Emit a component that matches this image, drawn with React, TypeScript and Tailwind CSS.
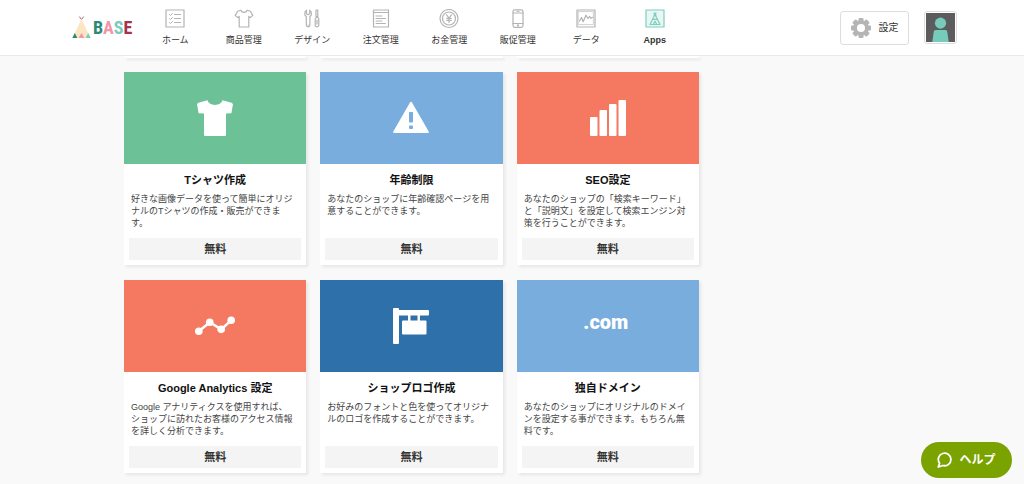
import type { ReactNode } from 'react'

const FONT = "font-['Liberation_Sans','Noto_Sans_CJK_JP',sans-serif]"

const NavIcon = ({ children, className = 'text-[#b3b3b3]' }: { children: ReactNode; className?: string }) => (
  <svg
    viewBox="0 0 20 20"
    className={`size-5 ${className}`}
    fill="none"
    stroke="currentColor"
    strokeWidth="1.2"
    strokeLinecap="round"
    strokeLinejoin="round"
    aria-hidden="true"
  >
    {children}
  </svg>
)

const navItems: { label: string; icon: ReactNode; active?: boolean }[] = [
  {
    label: 'ホーム',
    icon: (
      <NavIcon>
        <rect x="1" y="1" width="18" height="17" />
        <path d="M4.5 5.5l1 1 2-2M4.5 9.5l1 1 2-2M4.5 13.5l1 1 2-2M9.5 5.5h6M9.5 9.5h6M9.5 13.5h6" strokeWidth="1" />
      </NavIcon>
    ),
  },
  {
    label: '商品管理',
    icon: (
      <NavIcon>
        <path d="M6.8 1.2C7.8 4 12.2 4 13.2 1.2L16.3 2.2 18.8 6.4 16.3 8.6 14.8 7.4V18H5.2V7.4L3.7 8.6 1.2 6.4 3.7 2.2z" />
      </NavIcon>
    ),
  },
  {
    label: 'デザイン',
    icon: (
      <NavIcon>
        <path d="M4.5 1.2v3.5l1.6 1 1.6-1V1.2C10 2.6 10 6.4 7.9 7.6V16a1.8 1.8 0 0 1-3.6 0V7.6C2.2 6.4 2.2 2.6 4.5 1.2zM6.1 16v.2" />
        <path d="M14 1h1.8v6.5H14zM13.2 10.5c0-3 3.6-3 3.6 0V16a1.8 1.8 0 0 1-3.6 0zM15 11v4" />
      </NavIcon>
    ),
  },
  {
    label: '注文管理',
    icon: (
      <NavIcon>
        <path d="M2.5 1h15v17h-15zM2.5 3.5h15" />
        <path d="M5 7h6M5 9.5h9.5M5 12h6M5 14.5h9.5" strokeWidth="1" />
      </NavIcon>
    ),
  },
  {
    label: 'お金管理',
    icon: (
      <NavIcon>
        <circle cx="10" cy="9.5" r="9" />
        <circle cx="10" cy="9.5" r="6.5" />
        <path d="M7.5 5.8L10 9l2.5-3.2M10 9v4.5M7.8 9.4h4.4M7.8 11.4h4.4" />
      </NavIcon>
    ),
  },
  {
    label: '販促管理',
    icon: (
      <NavIcon>
        <rect x="5" y="0.8" width="10" height="17.6" rx="1.8" />
        <path d="M5 4h10M5 14.5h10M9 2.4h2" strokeWidth="1" />
        <circle cx="10" cy="16.4" r="0.5" />
      </NavIcon>
    ),
  },
  {
    label: 'データ',
    icon: (
      <NavIcon>
        <rect x="1" y="1" width="18" height="17" />
        <rect x="2.6" y="2.6" width="14.8" height="13" strokeWidth="0.6" />
        <path d="M3.5 12l2-3.5 1.6 4.2L10 6.2l2 3.3 1.5-2 1.5 1.8 1.6-1" />
      </NavIcon>
    ),
  },
  {
    label: 'Apps',
    active: true,
    icon: (
      <NavIcon className="text-[#7fcdbf]">
        <rect x="1" y="1" width="18" height="17" fill="#e9f7f4" />
        <path d="M9 4l2 2.2M11 4L9 6.2M10 5.5L5 15.5h10zM8.2 15.5l1.8-3.3 1.8 3.3M7.6 10.4h4.8" />
      </NavIcon>
    ),
  },
]

const ShirtIcon = () => (
  <svg viewBox="0 0 36 36" className="size-9" fill="#fff" aria-hidden="true">
    <path d="M10.5.3C12 6.5 24 6.5 25.5.3L34.6 2.8 36 4 34.4 13.2 29 13.4V35q0 1-1 1H8q-1 0-1-1V13.4L1.6 13.2 0 4 1.4 2.8z" />
  </svg>
)

const WarningIcon = () => (
  <svg viewBox="0 0 36 36" className="size-9" aria-hidden="true">
    <path d="M17 2.6q1-1.6 2 0L35.7 31.5q.6 1.5-1 1.5H1.3q-1.6 0-1-1.5z" fill="#fff" />
    <rect x="16" y="12" width="4" height="10.5" rx="0.8" fill="#79addd" />
    <rect x="16" y="25.5" width="4" height="3.5" rx="1" fill="#79addd" />
  </svg>
)

const BarsIcon = () => (
  <svg viewBox="0 0 36 36" className="size-9" fill="#fff" aria-hidden="true">
    <rect x="0" y="17" width="7.5" height="19" rx="1" />
    <rect x="9.5" y="10" width="7.5" height="26" rx="1" />
    <rect x="19" y="4" width="7.5" height="32" rx="1" />
    <rect x="28.5" y="0" width="7.5" height="36" rx="1" />
  </svg>
)

const LineIcon = () => (
  <svg viewBox="0 0 42 20" className="h-5 w-10" fill="#fff" aria-hidden="true">
    <path d="M4 15.5L15.5 6 27.5 13.5 38 4" fill="none" stroke="#fff" strokeWidth="2.6" />
    <circle cx="4" cy="15.5" r="4" />
    <circle cx="15.5" cy="6" r="4" />
    <circle cx="27.5" cy="13.5" r="4" />
    <circle cx="38" cy="4" r="4" />
  </svg>
)

const SignIcon = () => (
  <svg viewBox="0 0 36 36" className="size-9" fill="#fff" aria-hidden="true">
    <rect x="0" y="0" width="6" height="36" rx="1" />
    <rect x="4" y="2" width="32" height="5.5" rx="1" />
    <rect x="15" y="7" width="2.5" height="6" />
    <rect x="24.5" y="7" width="2.5" height="6" />
    <rect x="9" y="12.5" width="24.5" height="14" rx="1" />
  </svg>
)

const apps: { title: string; text: string; color: string; icon: ReactNode }[] = [
  {
    title: 'Tシャツ作成',
    text: '好きな画像データを使って簡単にオリジナルのTシャツの作成・販売ができます。',
    color: 'bg-[#6cc196]',
    icon: <ShirtIcon />,
  },
  {
    title: '年齢制限',
    text: 'あなたのショップに年齢確認ページを用意することができます。',
    color: 'bg-[#79addd]',
    icon: <WarningIcon />,
  },
  {
    title: 'SEO設定',
    text: 'あなたのショップの「検索キーワード」と「説明文」を設定して検索エンジン対策を行うことができます。',
    color: 'bg-[#f57860]',
    icon: <BarsIcon />,
  },
  {
    title: 'Google Analytics 設定',
    text: 'Google アナリティクスを使用すれば、ショップに訪れたお客様のアクセス情報を詳しく分析できます。',
    color: 'bg-[#f57860]',
    icon: <LineIcon />,
  },
  {
    title: 'ショップロゴ作成',
    text: 'お好みのフォントと色を使ってオリジナルのロゴを作成することができます。',
    color: 'bg-[#2e70a9]',
    icon: <SignIcon />,
  },
  {
    title: '独自ドメイン',
    text: 'あなたのショップにオリジナルのドメインを設定する事ができます。もちろん無料です。',
    color: 'bg-[#79addd]',
    icon: <span className="pr-1 pb-2 font-['Roboto',sans-serif] text-xl leading-5 font-black text-white">.com</span>,
  },
]

const Logo = () => (
  <a href="#" aria-label="BASE" className="flex w-[69px] shrink-0 items-center gap-0.5">
    <svg viewBox="0 0 19 23" className="h-[23px] w-[19px] shrink-0" aria-hidden="true">
      <path d="M7.3.6L9.5 3.5 11.7.6" fill="none" stroke="#b5606a" strokeWidth="1" />
      <path d="M9.5 3L18.5 22H.5z" fill="#fbe5c3" />
      <path d="M2.8 17L5.3 22H.3z" fill="#2a8a78" />
      <path d="M9.5 17L12.3 22H6.7z" fill="#f295a5" />
      <path d="M16.2 17L18.7 22h-5z" fill="#78ccbc" />
    </svg>
    <span className="font-['Liberation_Sans_Narrow','Roboto_Condensed','Roboto',sans-serif] text-lg leading-6 font-bold">
      <span className="text-[#2a8a78]">B</span>
      <span className="text-[#f295a5]">A</span>
      <span className="text-[#78ccbc]">S</span>
      <span className="text-[#a8324c]">E</span>
    </span>
  </a>
)

const Header = () => (
  <header className="flex h-14 items-center border-b border-[#e9e9e9] bg-white pr-[67px] pl-18">
    <Logo />
    <nav className="grid max-w-[548px] flex-1 grid-cols-8 pt-0.5">
      {navItems.map(({ label, icon, active }) => (
        <a
          key={label}
          href="#"
          className={`flex flex-col items-center gap-[3px] text-[9px] leading-4 text-[#333] ${active ? 'font-bold' : ''}`}
        >
          {icon}
          {label}
        </a>
      ))}
    </nav>
    <div className="ml-auto flex items-center gap-[15px]">
      <button
        type="button"
        className="flex h-[34px] w-[69px] items-center justify-center gap-2 rounded-[3px] border border-[#ddd] bg-white text-[10px] text-[#333]"
      >
        <svg viewBox="0 0 20 20" className="size-5" aria-hidden="true">
          <g fill="#b5b5b5">
            <rect x="7.5" y="0" width="5" height="20" rx="1" />
            <rect x="7.5" y="0" width="5" height="20" rx="1" transform="rotate(45 10 10)" />
            <rect x="7.5" y="0" width="5" height="20" rx="1" transform="rotate(90 10 10)" />
            <rect x="7.5" y="0" width="5" height="20" rx="1" transform="rotate(135 10 10)" />
            <circle cx="10" cy="10" r="7.8" />
          </g>
          <circle cx="10" cy="10" r="4" fill="#fff" />
        </svg>
        設定
      </button>
      <button type="button" aria-label="アカウント" className="rounded-[3px] border border-[#ddd] bg-white p-px">
        <svg viewBox="0 0 30 30" className="size-[29px]" aria-hidden="true">
          <rect width="30" height="30" fill="#5c5c5e" />
          <circle cx="15" cy="10.5" r="5.8" fill="#76cbbb" />
          <path d="M6.5 30L8 19.5Q8.2 17.5 10 17.5H20Q21.8 17.5 22 19.5L23.5 30z" fill="#76cbbb" />
        </svg>
      </button>
    </div>
  </header>
)

export default function App() {
  return (
    <div className={`min-h-screen bg-[#f9f9f9] ${FONT}`}>
      <Header />
      <main className="ml-31 max-w-[575px]">
        {/* bottom edge of the row scrolled under the header */}
        <div className="mb-3.5 grid grid-cols-3 gap-x-3.5">
          <div className="h-0.5 bg-white shadow-[2px_2px_3px_rgba(0,0,0,0.08)]" />
          <div className="h-0.5 bg-white shadow-[2px_2px_3px_rgba(0,0,0,0.08)]" />
          <div className="h-0.5 bg-white shadow-[2px_2px_3px_rgba(0,0,0,0.08)]" />
        </div>
        <div className="grid grid-cols-3 gap-x-3.5 gap-y-[15px]">
          {apps.map(({ title, text, color, icon }) => (
            <a
              key={title}
              href="#"
              className="flex flex-col bg-white pb-[5px] shadow-[2px_2px_3px_rgba(0,0,0,0.08)]"
            >
              <div className={`flex h-[92px] items-center justify-center ${color}`}>{icon}</div>
              <h2 className="pt-2 text-center text-[11px] leading-4 font-bold text-[#111]">{title}</h2>
              <p className="mt-[5px] min-h-9 pr-[13px] pl-[7px] text-[9px] leading-3 text-[#444]">{text}</p>
              <p className="mx-[5px] mt-[9px] bg-[#f4f4f4] text-center text-[11px] leading-[22px] font-bold text-[#333]">
                無料
              </p>
            </a>
          ))}
        </div>
      </main>
      <button
        type="button"
        className="fixed right-3 bottom-1.5 flex h-9 w-[91px] items-center justify-center gap-1.5 rounded-full bg-[#7aa300] text-xs font-bold text-white"
      >
        <svg
          viewBox="0 0 16 16"
          className="size-4"
          fill="none"
          stroke="#fff"
          strokeWidth="1.8"
          strokeLinejoin="round"
          aria-hidden="true"
        >
          <path d="M2.6 11.2A6.3 6.3 0 1 1 6 13.5L1.3 15z" />
        </svg>
        ヘルプ
      </button>
    </div>
  )
}
